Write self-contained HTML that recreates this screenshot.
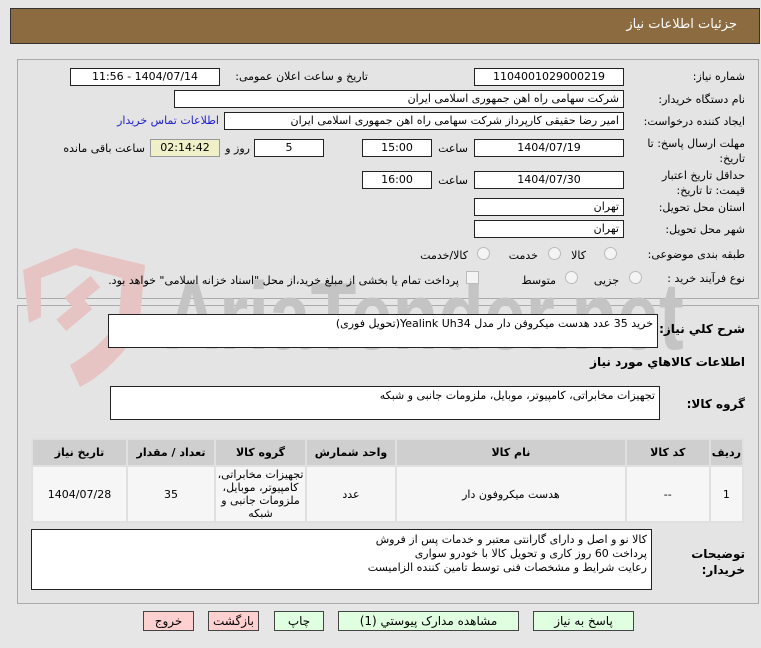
<!DOCTYPE html>
<html><head><meta charset="utf-8"><style>
body{margin:0;width:761px;height:648px;background:#e6e6e6;font-family:"DejaVu Sans","Liberation Sans",sans-serif;font-size:11px;color:#000;position:relative;overflow:hidden}
.a{position:absolute}
.hd{left:10px;top:8px;width:748px;height:34px;background:#8b6b3f;border:1px solid #333}
.hd span{position:absolute;right:22px;top:8px;color:#fff;font-size:13px}
.pn{border:1px solid #aaa;background:#e4e4e4;z-index:1}
.bx{position:absolute;background:#fff;border:1px solid #222;line-height:16px;direction:rtl;padding:0 4px;box-sizing:border-box;height:18px;white-space:nowrap;z-index:5}
.c{text-align:center}
.l{position:absolute;direction:rtl;white-space:nowrap;text-align:right;z-index:5}
.rad{position:absolute;width:11px;height:11px;border-radius:50%;border:1px solid #bbb;background:#f4f4f4;z-index:5}
table{border-collapse:separate;border-spacing:2px;background:#e0e0e0;z-index:5}
td,th{text-align:center;font-size:11px}
th{background:#cfcfcf;height:23px;font-weight:bold}
td{background:#f6f6f6;height:52px}
.btn{position:absolute;top:611px;height:18px;border:1px solid #444;line-height:18px;text-align:center;font-size:12px}
.wm{left:165px;top:262px;height:110px;overflow:visible;z-index:3;font-family:"Liberation Sans",sans-serif;font-weight:bold;font-size:96px;line-height:110px;color:#c4c4c4;transform-origin:0 0;transform:scaleX(0.78);white-space:nowrap}
</style></head><body>
<div class="a hd"><span>جزئیات اطلاعات نیاز</span></div>
<div class="a pn" style="left:17px;top:59px;width:740px;height:238px"></div>
<div class="a pn" style="left:17px;top:305px;width:740px;height:297px"></div>
<svg class="a" style="left:15px;top:245px;z-index:3" width="150" height="150">
<path d="M8 25 L60 3 L130 20 L124 85 Q98 125 65 142 L55 120 Q92 98 104 72 L107 33 L60 20 L26 33 L26 72 L14 78 Z" fill="#e6c4c4"/>
<rect x="42" y="62" width="34" height="15" fill="#e6c4c4" transform="rotate(-40 59 69)"/>
<rect x="50" y="40" width="34" height="15" fill="#e6c4c4" transform="rotate(-40 67 47)"/>
</svg>
<div class="a wm">AriaTender.net</div>

<div class="l" style="right:16px;top:70px">شماره نیاز:</div>
<div class="bx c" style="left:474px;top:68px;width:150px">1104001029000219</div>
<div class="l" style="right:393px;top:70px">تاریخ و ساعت اعلان عمومی:</div>
<div class="bx c" style="left:70px;top:68px;width:150px">1404/07/14 - 11:56</div>

<div class="l" style="right:16px;top:93px">نام دستگاه خریدار:</div>
<div class="bx" style="left:174px;top:90px;width:450px">شرکت سهامی راه اهن جمهوری اسلامی ایران</div>

<div class="l" style="right:16px;top:115px">ایجاد کننده درخواست:</div>
<div class="bx" style="left:224px;top:112px;width:400px">امیر رضا  حقیقی کارپرداز شرکت سهامی راه اهن جمهوری اسلامی ایران</div>
<div class="l" style="right:542px;top:114px;color:#2020d0">اطلاعات تماس خریدار</div>

<div class="l" style="right:16px;top:136px;line-height:15px">مهلت ارسال پاسخ: تا<br>تاریخ:</div>
<div class="bx c" style="left:474px;top:139px;width:150px">1404/07/19</div>
<div class="l" style="right:293px;top:142px">ساعت</div>
<div class="bx c" style="left:362px;top:139px;width:70px">15:00</div>
<div class="bx c" style="left:254px;top:139px;width:70px">5</div>
<div class="l" style="right:511px;top:142px">روز و</div>
<div class="bx c" style="left:150px;top:139px;width:70px;background:#f0f0c8;border-color:#999">02:14:42</div>
<div class="l" style="right:616px;top:142px">ساعت باقی مانده</div>

<div class="l" style="right:16px;top:168px;line-height:15px">حداقل تاریخ اعتبار<br>قیمت: تا تاریخ:</div>
<div class="bx c" style="left:474px;top:171px;width:150px">1404/07/30</div>
<div class="l" style="right:293px;top:174px">ساعت</div>
<div class="bx c" style="left:362px;top:171px;width:70px">16:00</div>

<div class="l" style="right:16px;top:201px">استان محل تحویل:</div>
<div class="bx" style="left:474px;top:198px;width:150px">تهران</div>
<div class="l" style="right:16px;top:223px">شهر محل تحویل:</div>
<div class="bx" style="left:474px;top:220px;width:150px">تهران</div>

<div class="l" style="right:16px;top:248px">طبقه بندی موضوعی:</div>
<div class="rad" style="left:604px;top:247px"></div><div class="l" style="right:175px;top:249px">کالا</div>
<div class="rad" style="left:548px;top:247px"></div><div class="l" style="right:223px;top:249px">خدمت</div>
<div class="rad" style="left:477px;top:247px"></div><div class="l" style="right:293px;top:249px">کالا/خدمت</div>

<div class="l" style="right:16px;top:272px">نوع فرآیند خرید :</div>
<div class="rad" style="left:629px;top:271px"></div><div class="l" style="right:142px;top:274px">جزیی</div>
<div class="rad" style="left:565px;top:271px"></div><div class="l" style="right:205px;top:274px">متوسط</div>
<div class="a" style="left:466px;top:271px;width:11px;height:11px;border:1px solid #bbb;background:#f4f4f4;z-index:5"></div>
<div class="l" style="right:302px;top:274px">پرداخت تمام یا بخشی از مبلغ خرید،از محل "اسناد خزانه اسلامی" خواهد بود.</div>

<div class="l" style="right:16px;top:322px;font-weight:bold;font-size:12px">شرح کلي نياز:</div>
<div class="bx" style="left:108px;top:314px;width:550px;height:34px;background:#fff;line-height:18px">خرید 35 عدد هدست میکروفن دار مدل Yealink  Uh34(تحویل فوری)</div>
<div class="l" style="right:16px;top:355px;font-weight:bold;font-size:12px">اطلاعات کالاهاي مورد نياز</div>
<div class="l" style="right:16px;top:397px;font-weight:bold;font-size:12px">گروه کالا:</div>
<div class="bx" style="left:110px;top:386px;width:550px;height:34px;line-height:18px">تجهیزات مخابراتی، کامپیوتر، موبایل، ملزومات جانبی و شبکه</div>

<table class="a" style="left:31px;top:438px;width:713px;direction:rtl">
<tr><th style="width:25px">ردیف</th><th style="width:80px">کد کالا</th><th>نام کالا</th><th style="width:86px">واحد شمارش</th><th style="width:87px">گروه کالا</th><th style="width:84px">تعداد / مقدار</th><th style="width:91px">تاریخ نیاز</th></tr>
<tr><td>1</td><td>--</td><td>هدست میکروفون دار</td><td>عدد</td><td style="line-height:13px">تجهیزات مخابراتی، کامپیوتر، موبایل، ملزومات جانبی و شبکه</td><td>35</td><td>1404/07/28</td></tr>
</table>

<div class="l" style="right:16px;top:546px;font-weight:bold;font-size:12px;line-height:16px">توضیحات<br>خریدار:</div>
<div class="bx" style="left:31px;top:529px;width:621px;height:61px;line-height:14px;padding-top:3px">کالا نو و اصل و دارای گارانتی معتبر و خدمات پس از فروش<br>پرداخت 60 روز کاری و تحویل کالا با خودرو سواری<br>رعایت شرایط و مشخصات فنی توسط تامین کننده الزامیست</div>

<div class="btn" style="left:143px;width:49px;background:#ffd0d0">خروج</div>
<div class="btn" style="left:208px;width:49px;background:#ffd0d0">بازگشت</div>
<div class="btn" style="left:274px;width:48px;background:#e0ffe0">چاپ</div>
<div class="btn" style="left:338px;width:179px;background:#e0ffe0">مشاهده مدارک پیوستي (1)</div>
<div class="btn" style="left:533px;width:99px;background:#e0ffe0">پاسخ به نياز</div>
</body></html>
